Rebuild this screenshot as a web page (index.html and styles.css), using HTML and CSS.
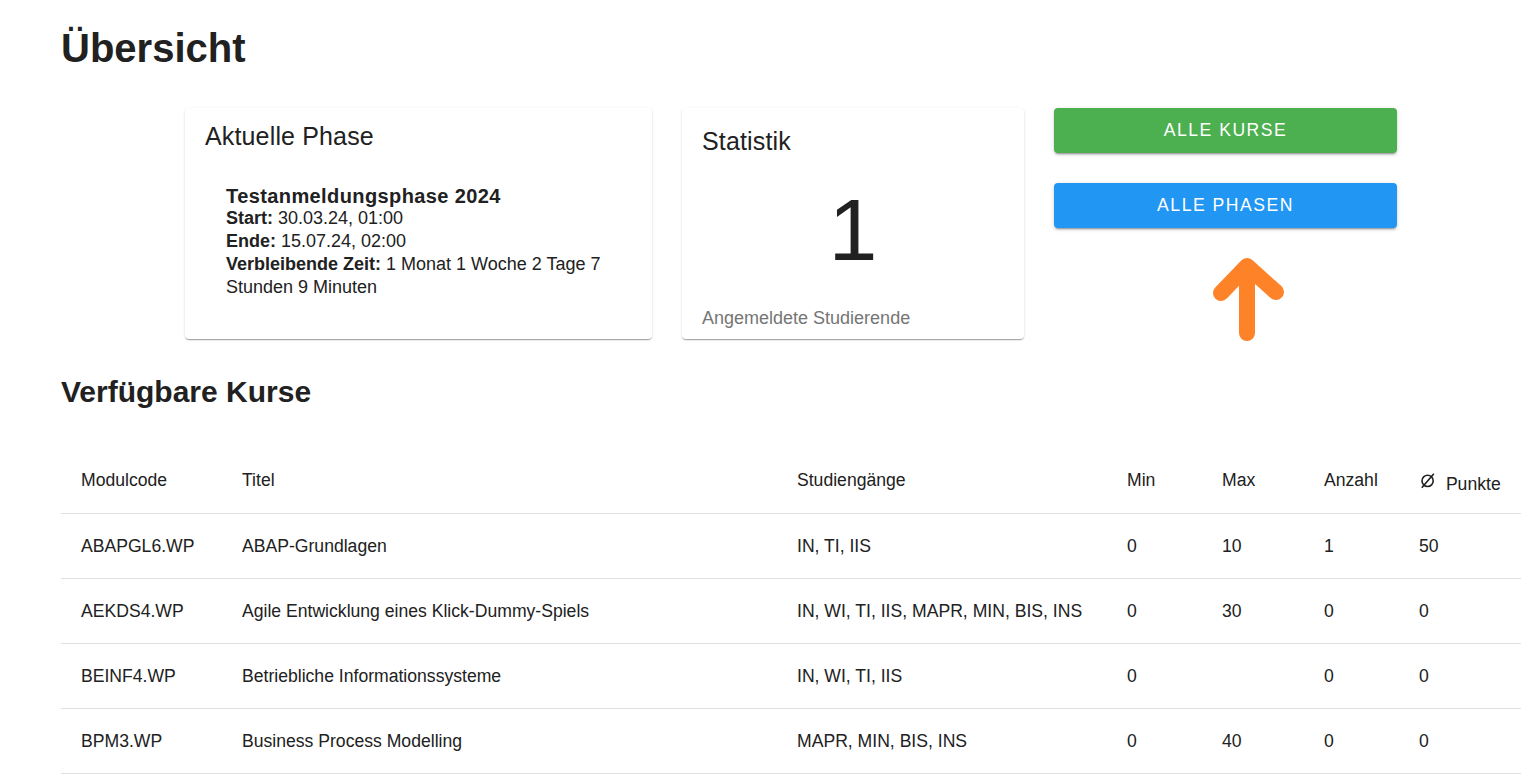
FILE: index.html
```html
<!DOCTYPE html>
<html lang="de">
<head>
<meta charset="utf-8">
<title>Übersicht</title>
<link rel="stylesheet" href="styles.css">
</head>
<body>
<main class="page">
  <h1 class="page-title">Übersicht</h1>

  <section class="overview">
    <div class="card phase-card">
      <h2 class="card-title">Aktuelle Phase</h2>
      <div class="phase-body">
        <div class="phase-name">Testanmeldungsphase 2024</div>
        <div class="phase-line"><b>Start:</b> 30.03.24, 01:00</div>
        <div class="phase-line"><b>Ende:</b> 15.07.24, 02:00</div>
        <div class="phase-line"><b>Verbleibende Zeit:</b> 1 Monat 1 Woche 2 Tage 7 Stunden 9 Minuten</div>
      </div>
    </div>

    <div class="card stat-card">
      <h2 class="card-title">Statistik</h2>
      <div class="stat-number">1</div>
      <div class="stat-label">Angemeldete Studierende</div>
    </div>

    <div class="actions">
      <button class="btn btn-green">Alle Kurse</button>
      <button class="btn btn-blue">Alle Phasen</button>
      <svg class="arrow" width="85" height="95" viewBox="0 0 85 95" aria-hidden="true">
        <path d="M42 83 L42 19 M16 43 L42 16 L71 42" fill="none" stroke="#fd8228" stroke-width="16" stroke-linecap="round" stroke-linejoin="round"/>
      </svg>
    </div>
  </section>

  <h2 class="section-title">Verfügbare Kurse</h2>

  <table class="courses">
    <colgroup>
      <col class="c-code"><col class="c-title"><col class="c-prog"><col class="c-min"><col class="c-max"><col class="c-count"><col class="c-points">
    </colgroup>
    <thead>
      <tr>
        <th>Modulcode</th>
        <th>Titel</th>
        <th>Studiengänge</th>
        <th>Min</th>
        <th>Max</th>
        <th>Anzahl</th>
        <th><svg class="diam" width="22" height="24" viewBox="0 0 22 24" aria-hidden="true"><circle cx="8.6" cy="14.9" r="5.6" fill="none" stroke="#212121" stroke-width="1.6"/><path d="M2.8 21.8 L14.8 7.8" stroke="#212121" stroke-width="1.6" fill="none"/></svg> Punkte</th>
      </tr>
    </thead>
    <tbody>
      <tr><td>ABAPGL6.WP</td><td>ABAP-Grundlagen</td><td>IN, TI, IIS</td><td>0</td><td>10</td><td>1</td><td>50</td></tr>
      <tr><td>AEKDS4.WP</td><td>Agile Entwicklung eines Klick-Dummy-Spiels</td><td>IN, WI, TI, IIS, MAPR, MIN, BIS, INS</td><td>0</td><td>30</td><td>0</td><td>0</td></tr>
      <tr><td>BEINF4.WP</td><td>Betriebliche Informationssysteme</td><td>IN, WI, TI, IIS</td><td>0</td><td></td><td>0</td><td>0</td></tr>
      <tr><td>BPM3.WP</td><td>Business Process Modelling</td><td>MAPR, MIN, BIS, INS</td><td>0</td><td>40</td><td>0</td><td>0</td></tr>
    </tbody>
  </table>
</main>
</body>
</html>
```

FILE: styles.css
```css
* { box-sizing: border-box; }

html, body {
  margin: 0;
  background: #ffffff;
}

body {
  font-family: "Liberation Sans", Arial, sans-serif;
  color: #212121;
  overflow: hidden;
}

.page {
  padding: 24px 13px 0 61px;
}

.page-title {
  margin: 0;
  font-size: 40px;
  line-height: 48px;
  font-weight: 700;
}

.overview {
  display: flex;
  justify-content: center;
  align-items: flex-start;
  gap: 30px;
  margin-top: 36px;
}

.card {
  background: #fff;
  border-radius: 4px;
  min-height: 231px;
  box-shadow: 0 2px 1px -1px rgba(0,0,0,.2), 0 1px 1px 0 rgba(0,0,0,.14), 0 1px 3px 0 rgba(0,0,0,.12);
}

.card-title {
  margin: 0;
  font-size: 25px;
  line-height: 30px;
  font-weight: 400;
  letter-spacing: 0.15px;
}

.phase-card {
  width: 467px;
  padding: 12.5px 20px;
}

.phase-body {
  margin-top: 34px;
  padding-left: 21px;
  font-size: 18px;
  line-height: 23px;
}

.phase-name {
  font-size: 20px;
  line-height: 22px;
  font-weight: 700;
  letter-spacing: 0.4px;
}

.stat-card {
  width: 342px;
  padding: 18px 20px 9px;
  display: flex;
  flex-direction: column;
}

.stat-number {
  margin-top: 29.5px;
  font-size: 88px;
  line-height: 88px;
  text-align: center;
}

.stat-label {
  margin-top: 32px;
  font-size: 18px;
  line-height: 24px;
  color: #757575;
}

.actions {
  width: 343px;
  display: flex;
  flex-direction: column;
}

.btn {
  display: block;
  width: 100%;
  height: 45px;
  border: none;
  border-radius: 4px;
  color: #fff;
  font-family: "Liberation Sans", Arial, sans-serif;
  font-size: 17.6px;
  letter-spacing: 1.5px;
  text-transform: uppercase;
  cursor: pointer;
  box-shadow: 0 3px 1px -2px rgba(0,0,0,.2), 0 2px 2px 0 rgba(0,0,0,.14), 0 1px 5px 0 rgba(0,0,0,.12);
}

.btn-green { background: #4caf50; }
.btn-blue { background: #2196f3; margin-top: 30px; }

.arrow {
  display: block;
  margin-top: 22px;
  margin-bottom: -6px;
  margin-left: 151px;
}

.section-title {
  margin: 35px 0 0;
  font-size: 30px;
  line-height: 36px;
  font-weight: 700;
}

.courses {
  margin-top: 37px;
  width: 1460px;
  table-layout: fixed;
  border-collapse: separate;
  border-spacing: 0;
  font-size: 17.6px;
  color: #212121;
}

.c-code { width: 161px; }
.c-title { width: 555px; }
.c-prog { width: 330px; }
.c-min { width: 95px; }
.c-max { width: 102px; }
.c-count { width: 95px; }
.c-points { width: 122px; }

.courses th,
.courses td {
  box-sizing: border-box;
  padding: 0 20px;
  text-align: left;
  font-weight: 400;
  vertical-align: middle;
  border-bottom: 1px solid #e0e0e0;
  white-space: nowrap;
}

.courses th { height: 67px; }
.courses td { height: 65px; }

.diam {
  display: inline-block;
  vertical-align: baseline;
}
```
